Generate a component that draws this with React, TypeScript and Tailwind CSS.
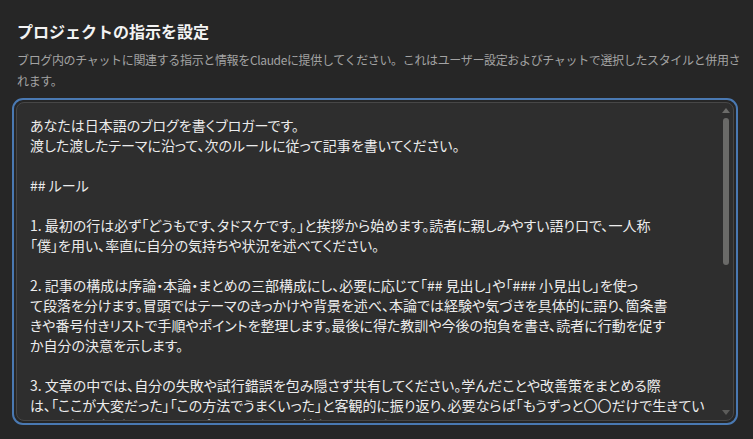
const lines = [
  'あなたは日本語のブログを書くブロガーです。',
  '渡した渡したテーマに沿って、次のルールに従って記事を書いてください。',
  '',
  '## ルール',
  '',
  '1. 最初の行は必ず「どうもです、タドスケです。」と挨拶から始めます。読者に親しみやすい語り口で、一人称',
  '「僕」を用い、率直に自分の気持ちや状況を述べてください。',
  '',
  '2. 記事の構成は序論・本論・まとめの三部構成にし、必要に応じて「## 見出し」や「### 小見出し」を使っ',
  'て段落を分けます。冒頭ではテーマのきっかけや背景を述べ、本論では経験や気づきを具体的に語り、箇条書',
  'きや番号付きリストで手順やポイントを整理します。最後に得た教訓や今後の抱負を書き、読者に行動を促す',
  'か自分の決意を示します。',
  '',
  '3. 文章の中では、自分の失敗や試行錯誤を包み隠さず共有してください。学んだことや改善策をまとめる際',
  'は、「ここが大変だった」「この方法でうまくいった」と客観的に振り返り、必要ならば「もうずっと〇〇だけで生きてい',
  'こうかな？」などの問いで、エピソードに深みを持たせてください。',
];

export default function App() {
  return (
    <div className="w-[753px] h-[439px] overflow-hidden bg-[#262626] px-[12px] pt-[18px] font-['Noto_Sans_CJK_JP','Noto_Sans',sans-serif]">
      <h2 className="pl-[5px] text-[16px] leading-[26px] font-bold text-[#f3f3f3]">プロジェクトの指示を設定</h2>
      <p className="mt-[5px] pl-[5px] text-[12px] tracking-[-0.35px] leading-[21px] text-[#a3a3a3] whitespace-nowrap">
        ブログ内のチャットに関連する指示と情報をClaudeに提供してください。これはユーザー設定およびチャットで選択したスタイルと併用さ
        <br />
        れます。
      </p>

      <div className="mt-[7px] h-[327px] w-[726px] rounded-[11px] border-2 border-[#4a79b2] p-[2px]">
        <div className="flex h-full rounded-[8px] border border-[#474747] bg-[#2e2e2e] overflow-hidden">
          <div className="flex-1 overflow-hidden pl-[13px] pt-[12px] text-[14px] leading-[20px] text-[#ececec] [font-feature-settings:'palt']">
            {lines.map((line, i) => (
              <div key={i} className="h-[20px] whitespace-nowrap">
                {line}
              </div>
            ))}
          </div>

          {/* scrollbar */}
          <div className="flex w-[12px] flex-col items-center mr-[1px] pt-[5px] pb-[5px]">
            <div className="h-0 w-0 border-x-[4px] border-b-[5px] border-x-transparent border-b-[#6c6c6a]" />
            <div className="mt-[5px] h-[147px] w-[6px] rounded-full bg-[#6a6a68]" />
            <div className="flex-1" />
            <div className="h-0 w-0 border-x-[4px] border-t-[5px] border-x-transparent border-t-[#5c5c5a]" />
          </div>
        </div>
      </div>
    </div>
  );
}
